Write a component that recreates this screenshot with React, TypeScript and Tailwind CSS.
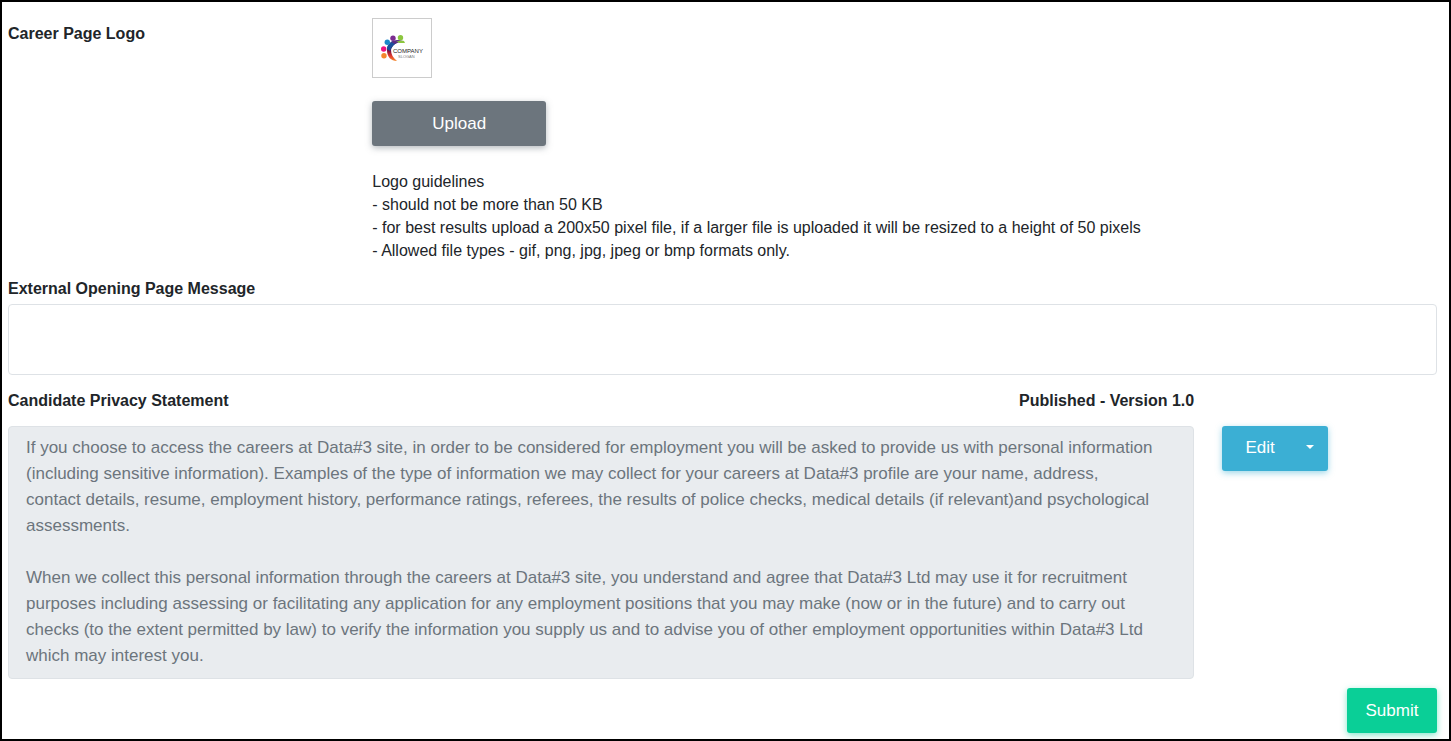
const privacyStatement = `If you choose to access the careers at Data#3 site, in order to be considered for employment you will be asked to provide us with personal information (including sensitive information). Examples of the type of information we may collect for your careers at Data#3 profile are your name, address, contact details, resume, employment history, performance ratings, referees, the results of police checks, medical details (if relevant)and psychological assessments.

When we collect this personal information through the careers at Data#3 site, you understand and agree that Data#3 Ltd may use it for recruitment purposes including assessing or facilitating any application for any employment positions that you may make (now or in the future) and to carry out checks (to the extent permitted by law) to verify the information you supply us and to advise you of other employment opportunities within Data#3 Ltd which may interest you.`

function CompanyLogo() {
  return (
    <svg viewBox="0 0 58 58" className="h-full w-full" role="img" aria-label="Company logo">
      <defs>
        <linearGradient id="swoosh" x1="0" y1="0" x2="0" y2="1">
          <stop offset="0" stopColor="#4b2a86" />
          <stop offset="0.3" stopColor="#17265c" />
          <stop offset="0.5" stopColor="#7a1040" />
          <stop offset="0.75" stopColor="#e23a2e" />
          <stop offset="1" stopColor="#f58a2c" />
        </linearGradient>
      </defs>
      <path d="M30 22 C21 20 14 25 14 31 C14 38 18 42 24 42 C20 39 18 35 18 31 C19 26 24 23 30 22 Z" fill="url(#swoosh)" />
      <path d="M14 30 C14 26 17 23 20 22 L22 25 C19 27 18 29 17 32 Z" fill="#1b4f9c" />
      <path d="M18 23 C21 21 25 20 28 22 L22 25 Z" fill="#5b2c83" />
      <path d="M23 22 C26 23 28 21 31 22 L32 24 L26 24 Z" fill="#8cc63f" />
      <circle cx="14.3" cy="23.3" r="2.7" fill="#1b87c9" />
      <circle cx="20" cy="19.3" r="2.7" fill="#7b2d90" />
      <circle cx="27.5" cy="18.8" r="2.7" fill="#8cc63f" />
      <circle cx="10.7" cy="30" r="2.7" fill="#ec1380" />
      <circle cx="11" cy="36.8" r="2.7" fill="#f5862b" />
      <text x="20" y="34" fontSize="6" fill="#222222">COMPANY</text>
      <text x="25" y="39" fontSize="4" fill="#777777">SLOGAN</text>
    </svg>
  )
}

export default function App() {
  return (
    <form className="min-h-screen border-2 border-black bg-white pt-4 pr-3 pb-1.5 pl-1.5 font-['Liberation_Sans',Arial,sans-serif] text-base text-[#212529]">
      {/* Logo */}
      <div className="grid grid-cols-12 gap-x-7">
        <label htmlFor="upload" className="col-span-3 pt-1 font-bold">Career Page Logo</label>
        <div className="col-span-9">
          <div className="size-[60px] border border-[#cccccc]">
            <CompanyLogo />
          </div>
          <button
            id="upload"
            type="button"
            className="mt-[23px] block h-[45px] w-[174px] rounded-[3px] bg-[#6c757d] text-[17px] text-white shadow-[0_2px_6px_rgba(108,117,125,0.5)]"
          >
            Upload
          </button>
          <div className="mt-6 leading-[23px]">
            <p>Logo guidelines</p>
            <p>- should not be more than 50 KB</p>
            <p>- for best results upload a 200x50 pixel file, if a larger file is uploaded it will be resized to a height of 50 pixels</p>
            <p>- Allowed file types - gif, png, jpg, jpeg or bmp formats only.</p>
          </div>
        </div>
      </div>

      {/* Opening message */}
      <div className="mt-[15px]">
        <label htmlFor="message" className="block font-bold">External Opening Page Message</label>
        <textarea
          id="message"
          className="mt-[3px] block h-[71px] w-full resize-none rounded border border-[#dee2e6] px-[17px] py-2 text-[17px] leading-[26px]"
        />
      </div>

      {/* Privacy statement */}
      <div className="mt-3.5 grid grid-cols-12 gap-x-7">
        <div className="col-span-10">
          <div className="flex justify-between font-bold">
            <label htmlFor="privacy">Candidate Privacy Statement</label>
            <span>Published - Version 1.0</span>
          </div>
          <textarea
            id="privacy"
            disabled
            value={privacyStatement}
            className="mt-[13px] block h-[253px] w-full resize-none overflow-hidden rounded border border-[#dee2e6] bg-[#e9ecef] py-2 pr-[38px] pl-[17px] text-[17px] leading-[26px] text-[#6c757d]"
          />
        </div>
        <div className="col-span-2 pt-[37px]">
          <div className="flex h-[45px] w-[106px] rounded-[3px] bg-[#3bafd4] text-[17px] text-white shadow-[0_2px_6px_rgba(59,175,212,0.5)]">
            <button type="button" className="w-[76px] pb-0.5">Edit</button>
            <button type="button" aria-label="More actions" className="flex flex-1 items-center pb-1 pl-2">
              <svg viewBox="0 0 8 4" className="h-1 w-2" fill="currentColor">
                <path d="M0 0h8L4 4z" />
              </svg>
            </button>
          </div>
        </div>
      </div>

      <div className="mt-[9px] flex justify-end">
        <button
          type="submit"
          className="h-[45px] w-[90px] rounded-[3px] bg-[#0acf97] text-[17px] text-white shadow-[0_2px_6px_rgba(10,207,151,0.5)]"
        >
          Submit
        </button>
      </div>
    </form>
  )
}
